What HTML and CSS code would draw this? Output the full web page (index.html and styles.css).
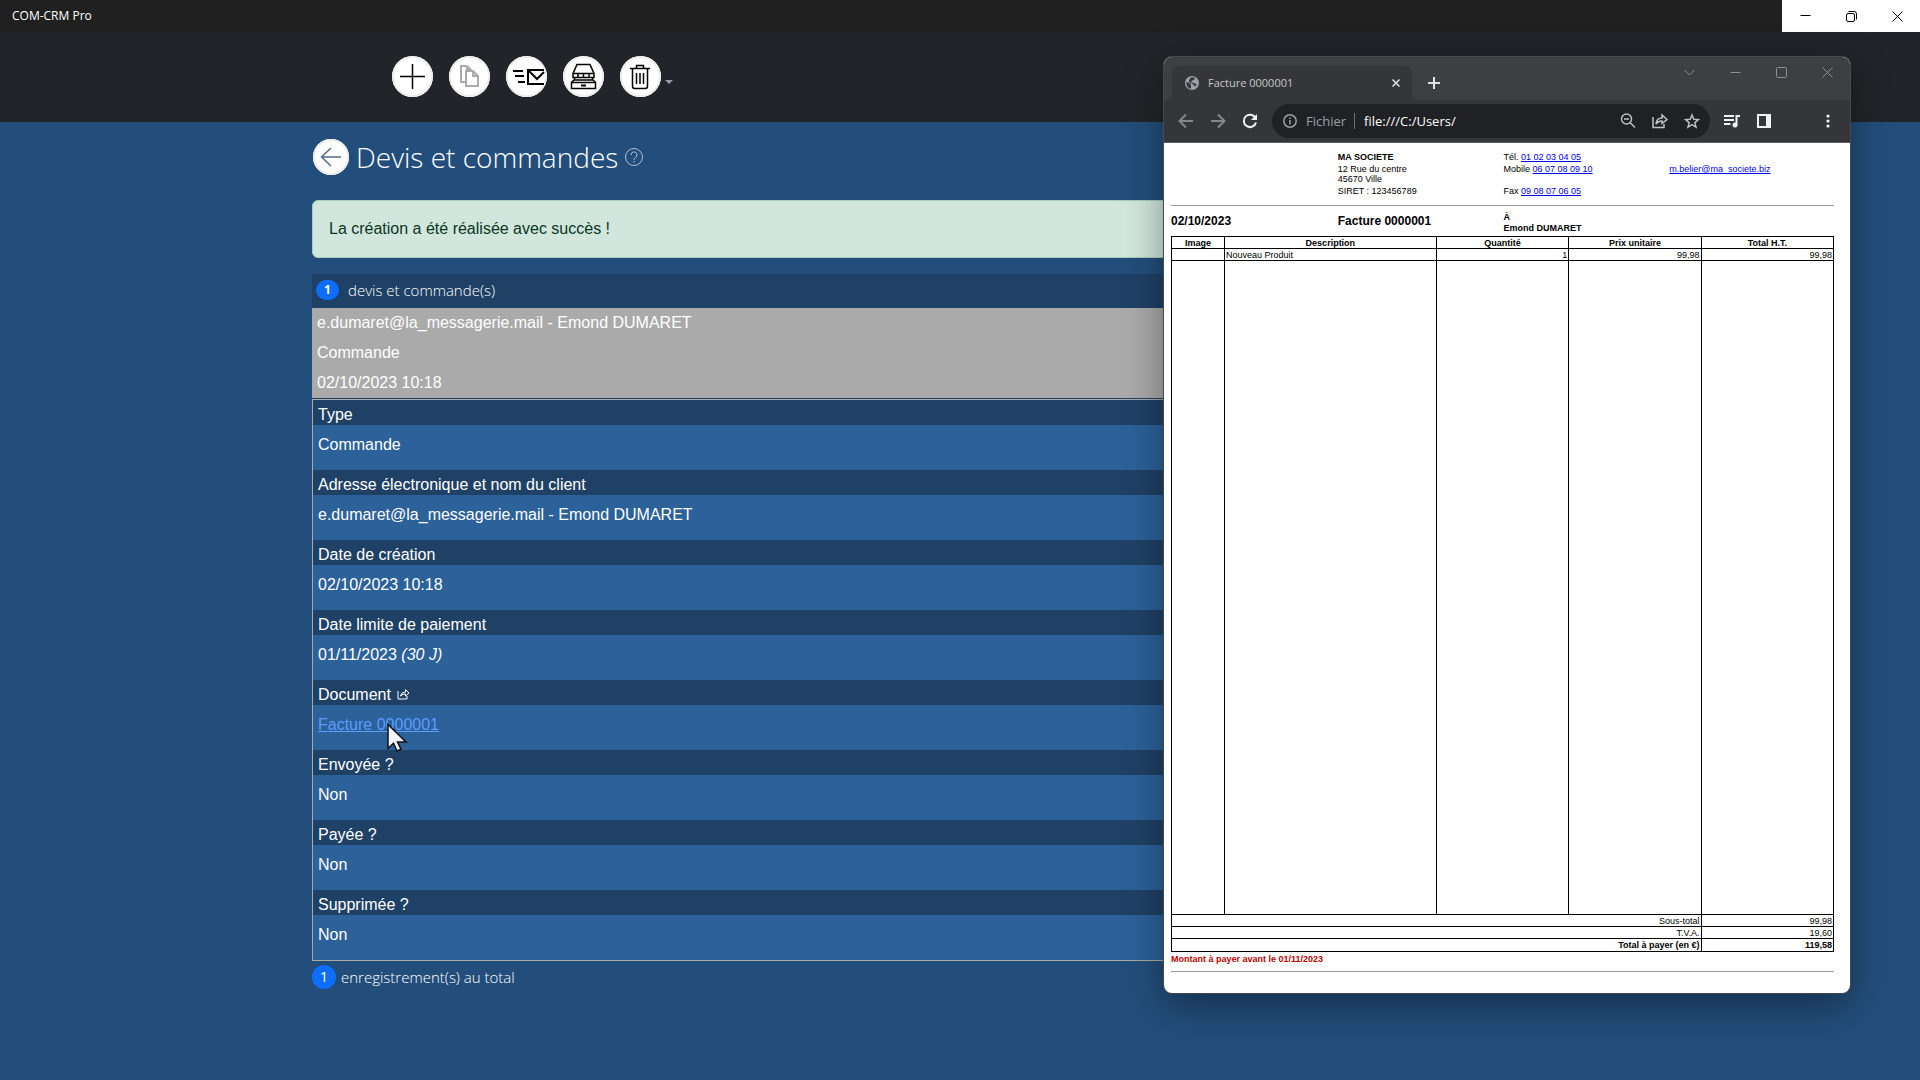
FILE: index.html
```html
<!DOCTYPE html>

<html lang="fr">
<head>
   <meta charset="utf-8">
   <meta name="viewport" content="width=device-width, initial-scale=1">

   <title>COM-CRM Pro</title>
   <link rel="stylesheet" href="styles.css">
</head>
<body>
  <div class="titlebar">
    <span class="titlebar-name">COM-CRM Pro</span>
    <div class="window-buttons window-buttons--light">
      <button type="button" aria-label="Réduire"><svg width="11" height="11" viewBox="0 0 11 11"><path d="M.5 4.5h10"/></svg></button>
      <button type="button" aria-label="Restaurer"><svg width="11" height="11" viewBox="0 0 11 11"><rect x=".5" y="2.5" width="8" height="8" rx="1.5"/><path d="M2.5.5H8A2.5 2.5 0 0 1 10.5 3v5.5"/></svg></button>
      <button type="button" aria-label="Fermer"><svg width="11" height="11" viewBox="0 0 11 11"><path d="M.5.5l10 10M10.5.5l-10 10"/></svg></button>
    </div>
  </div>

  <header class="header">
    <div class="container toolbar">
      <button type="button" class="round" aria-label="Ajouter">
        <svg width="41" height="41" viewBox="0 0 41 41"><path d="M20.5 8v25M8 20.5h25"/></svg>
      </button>
      <button type="button" class="round" aria-label="Copier" disabled>
        <svg width="41" height="41" viewBox="0 0 41 41"><path class="grey" d="M17 26h-5V10h6l4 4v1M18 10v4h4M17 15h7l5 5v10H17zM24 15v5h5"/></svg>
      </button>
      <button type="button" class="round" aria-label="Envoyer">
        <svg width="41" height="41" viewBox="0 0 41 41"><path class="thick" d="M7 15h10M9 20h9M12 26h7M38 14H22v14h16M23 15l8 8 7-7"/></svg>
      </button>
      <button type="button" class="round" aria-label="Archiver">
        <svg width="41" height="41" viewBox="0 0 41 41"><path d="M14 8.5h13l4 9v4H10v-4zM10 17.5h21M15 17.500v4M20.5 17.5v4M26 17.5v4M11.5 21.5v2l-3 3M29.5 21.5v2l3 3M11 24h19"/><rect x="8.5" y="26.5" width="24" height="6"/><path class="thick" d="M18 29.5h5"/></svg>
      </button>
      <button type="button" class="round" aria-label="Supprimer">
        <svg width="41" height="41" viewBox="0 0 41 41"><path d="M10 12.5h20M16.5 12V9.5h7V12M12.500 13v17q0 2.500 2 2.500h11q2 0 2-2.500V13M16.5 17v11M20 17v11M23.5 17v11"/></svg>
      </button>
      <button type="button" class="more" aria-label="Plus"></button>
    </div>
  </header>

  <main class="container">
    <div class="heading">
      <button type="button" class="round round--small" aria-label="Retour">
        <svg width="36" height="36" viewBox="0 0 36 36"><path class="blue" d="M28 18H9M18 9l-9.5 9 9.5 9"/></svg>
      </button>
      <h1>Devis et commandes</h1>
      <svg class="help" width="18" height="18" viewBox="0 0 18 18"><circle cx="9" cy="9" r="8.5"/><path d="M6 7a3 3 0 1 1 4.500 2.500Q9 10.300 9 12M9 13v1.500"/></svg>
    </div>

    <div class="alert" role="alert">La création a été réalisée avec succès !</div>

    <div class="count"><span class="badge">1</span> devis et commande(s)</div>

    <div class="order">
      <p>e.dumaret@la_messagerie.mail - Emond DUMARET</p>
      <p>Commande</p>
      <p>02/10/2023 10:18</p>
    </div>

    <dl class="details">
      <dt>Type</dt>
      <dd>Commande</dd>
      <dt>Adresse électronique et nom du client</dt>
      <dd>e.dumaret@la_messagerie.mail - Emond DUMARET</dd>
      <dt>Date de création</dt>
      <dd>02/10/2023 10:18</dd>
      <dt>Date limite de paiement</dt>
      <dd>01/11/2023 <em>(30 J)</em></dd>
      <dt>Document <svg class="open" width="13" height="12" viewBox="0 0 13 12"><path d="M1 3v8h9V8M3.5 8q.5-4 5-4V1.5L12 5 8.5 8V6q-3-.2-5 2z"/></svg></dt>
      <dd>
        <a href="#facture">Facture 0000001</a>
        <svg class="pointer" width="21" height="30" viewBox="0 0 21 30"><path d="M1 1.5v24l5.5-5.2 3.5 7.700 4-1.800-3.500-7.200H19z"/></svg>
      </dd>
      <dt>Envoyée ?</dt>
      <dd>Non</dd>
      <dt>Payée ?</dt>
      <dd>Non</dd>
      <dt>Supprimée ?</dt>
      <dd>Non</dd>
    </dl>

    <div class="total"><span class="badge badge--round">1</span> enregistrement(s) au total</div>
  </main>

  <!-- Browser window with the invoice -->
  <section class="browser">
    <div class="tabs">
      <div class="tab">
        <svg width="14" height="14" viewBox="0 0 14 14"><circle cx="7" cy="7" r="7" fill="#9aa0a6"/><path fill="#35363a" d="M1.5 6l3 1L6 9v3.800Q2 12 1.500 8zM6 1.500h4L9 4l-2 .5-1 2 3 .5 2.500 1.500L11 10l-2-.3L8 8 4.500 6.500 4 4z"/></svg>
        <span>Facture 0000001</span>
        <button type="button" aria-label="Fermer l'onglet"><svg width="8" height="8" viewBox="0 0 8 8"><path d="M.5.5l7 7M7.5.5l-7 7"/></svg></button>
      </div>
      <button type="button" class="new-tab" aria-label="Nouvel onglet"><svg width="12" height="12" viewBox="0 0 12 12"><path d="M6 0v12M0 6h12"/></svg></button>
      <div class="window-buttons">
        <button type="button" aria-label="Rechercher"><svg width="11" height="11" viewBox="0 0 11 11"><path d="M.5 3l5 5 5-5"/></svg></button>
        <button type="button" aria-label="Réduire"><svg width="11" height="11" viewBox="0 0 11 11"><path d="M.5 5.5h10"/></svg></button>
        <button type="button" aria-label="Agrandir"><svg width="11" height="11" viewBox="0 0 11 11"><rect x=".5" y=".5" width="10" height="10" rx="1"/></svg></button>
        <button type="button" aria-label="Fermer"><svg width="11" height="11" viewBox="0 0 11 11"><path d="M.5.5l10 10M10.5.5l-10 10"/></svg></button>
      </div>
    </div>

    <div class="bar">
      <button type="button" class="icon icon--dim" aria-label="Précédent"><svg width="16" height="16" viewBox="0 0 16 16"><path d="M15 8H2M8 1.5L1.500 8 8 14.500"/></svg></button>
      <button type="button" class="icon icon--dim" aria-label="Suivant"><svg width="16" height="16" viewBox="0 0 16 16"><path d="M1 8h13M8 1.5L14.500 8 8 14.500"/></svg></button>
      <button type="button" class="icon icon--bright" aria-label="Actualiser"><svg width="16" height="16" viewBox="0 0 16 16"><path d="M13.5 5A6.200 6.200 0 1 0 14 9.500"/><path class="solid" d="M15 1v6H9z"/></svg></button>
      <div class="address">
        <svg class="info" width="14" height="14" viewBox="0 0 14 14"><circle cx="7" cy="7" r="6.2"/><path d="M7 6v4.500M7 3.500V5"/></svg>
        <label class="scheme" for="url">Fichier</label>
        <input type="text" id="url" value="file:///C:/Users/">
        <button type="button" class="icon" aria-label="Zoom"><svg class="thin" width="16" height="16" viewBox="0 0 16 16"><circle cx="6.5" cy="6" r="5"/><path d="M10 9.5l5 5M4 6h5"/></svg></button>
        <button type="button" class="icon" aria-label="Partager"><svg class="thin" width="16" height="16" viewBox="0 0 16 16"><path d="M1 4v10.500h11V11M4 11q.5-6 6-6V2l5 4.500-5 4V8q-4 0-6 3z"/></svg></button>
        <button type="button" class="icon" aria-label="Favoris"><svg class="thin" width="16" height="16" viewBox="0 0 16 16"><path d="M8 2l1.800 4.200 4.600.4-3.500 3 1.100 4.500L8 11.700l-4 2.400 1.100-4.500-3.500-3 4.600-.4z"/></svg></button>
      </div>
      <button type="button" class="icon icon--bright" aria-label="Médias"><svg width="16" height="16" viewBox="0 0 16 16"><path d="M0 3h10M0 7h10M0 11h6.500M12.500 12V3H16"/><circle class="solid" cx="11" cy="12" r="2.5"/></svg></button>
      <button type="button" class="icon icon--bright" aria-label="Panneau latéral"><svg width="14" height="14" viewBox="0 0 14 14"><path class="solid" fill-rule="evenodd" d="M0 0h14v14H0zM2 2v10h7V2z"/></svg></button>
      <button type="button" class="icon icon--bright icon--menu" aria-label="Menu"><svg width="4" height="14" viewBox="0 0 4 14"><circle class="solid" cx="2" cy="2" r="1.6"/><circle class="solid" cx="2" cy="7" r="1.6"/><circle class="solid" cx="2" cy="12" r="1.6"/></svg></button>
    </div>

    <article class="invoice" id="facture">
      <div class="invoice-head">
        <strong class="col-2">MA SOCIETE</strong>
        <span>Tél. <a href="tel:0102030405">01 02 03 04 05</a></span>
        <span class="col-2">12 Rue du centre<br>45670 Ville</span>
        <span>Mobile <a href="tel:0607080910">06 07 08 09 10</a></span>
        <a href="mailto:m.belier@ma_societe.biz">m.belier@ma_societe.biz</a>
        <span class="col-2">SIRET : 123456789</span>
        <span>Fax <a href="tel:0908070605">09 08 07 06 05</a></span>
      </div>

      <div class="invoice-title">
        <h2>02/10/2023</h2>
        <h2>Facture 0000001</h2>
        <strong>À<br>Emond DUMARET</strong>
      </div>

      <table class="lines">
        <thead>
          <tr>
            <th class="w-image">Image</th>
            <th class="w-description">Description</th>
            <th>Quantité</th>
            <th>Prix unitaire</th>
            <th>Total H.T.</th>
          </tr>
        </thead>
        <tbody>
          <tr>
            <td></td>
            <td class="text">Nouveau Produit</td>
            <td>1</td>
            <td>99,98</td>
            <td>99,98</td>
          </tr>
          <tr class="filler"><td></td><td></td><td></td><td></td><td></td></tr>
        </tbody>
        <tfoot>
          <tr><td colspan="4">Sous-total</td><td>99,98</td></tr>
          <tr><td colspan="4">T.V.A.</td><td>19,60</td></tr>
          <tr class="due"><td colspan="4">Total à payer (en €)</td><td>119,58</td></tr>
        </tfoot>
      </table>

      <p class="deadline">Montant à payer avant le 01/11/2023</p>
    </article>
  </section>
</body>
</html>
```

FILE: styles.css
```css
*, *::before, *::after {
   box-sizing: border-box;
}
body {
   margin: 0;
   min-height: 100vh;
   background: #234e7b;
   color: #fff;
   font: 16px/24px "Liberation Sans", Arial, sans-serif;
}
h1, h2, p, dl, dd {
   margin: 0;
}
button {
   display: flex;
   align-items: center;
   justify-content: center;
   padding: 0;
   border: 0;
   background: none;
   color: inherit;
   font: inherit;
}
svg {
   flex: none;
   fill: none;
   stroke: currentColor;
}
.container {
   width: 100%;
   max-width: 1320px;
   margin: 0 auto;
   padding: 0 12px;
}

/* Title bar */
.titlebar {
   display: flex;
   align-items: center;
   justify-content: space-between;
   height: 32px;
   padding-left: 12px;
   background: #202020;
}
.titlebar-name {
   font: 12px/16px "Open Sans", sans-serif;
}
.window-buttons {
   display: flex;
   color: #8d9092;
}
.window-buttons button {
   width: 46px;
   height: 31px;
}
.window-buttons--light {
   background: #fff;
   color: #000;
}
.window-buttons--light button {
   height: 32px;
}

/* Toolbar */
.header {
   background: #212529;
}
.toolbar {
   display: flex;
   align-items: center;
   gap: 16px;
   height: 90px;
   padding-bottom: 2px;
   padding-left: 92px;
}
.round {
   width: 41px;
   height: 41px;
   border-radius: 50%;
   background: #fff;
   box-shadow: inset 0 0 0 2px #eee;
   color: #000;
}
.round svg {
   stroke-width: 1.5;
}
.round .thick {
   stroke-width: 2;
}
.round .grey {
   stroke: #aaa;
   stroke-width: 2;
}
.round .blue {
   stroke: #56698c;
}
.round--small {
   width: 36px;
   height: 36px;
}
.more {
   margin: 12px 0 0 -12px;
   border: 4px solid transparent;
   border-top-color: #9a9da0;
   border-bottom: 0;
}

/* Page */
.heading {
   display: flex;
   align-items: center;
   gap: 7px;
   padding: 16px 1px 24px;
}
h1 {
   font: 300 28px/38px "Open Sans", sans-serif;
}
.help {
   color: #b4c0cf;
}
.alert {
   padding: 16px;
   border: 1px solid #a3cfbb;
   border-radius: 6px;
   background: #d1e7dd;
   color: #0a3622;
}
.count {
   display: flex;
   align-items: center;
   gap: 9px;
   height: 34px;
   margin-top: 16px;
   padding: 0 4px 2px;
   background: #1f4166;
   font: 300 15px/24px "Open Sans", sans-serif;
}
.badge {
   width: 23px;
   border-radius: 10px;
   background: #0d6efd;
   font: bold 12px/20px "Open Sans", sans-serif;
   text-align: center;
}
.badge--round {
   width: 24px;
   border-radius: 50%;
   font: 14px/24px "Open Sans", sans-serif;
}
.order {
   border-bottom: 1px solid #1f4166;
   background: #aaa;
}
.order p {
   padding: 3px 5px;
}
.details {
   border: 1px solid #aaa;
   background: #2c6199;
}
.details dt {
   height: 25px;
   padding: 3px 5px 0;
   background: #1f4166;
}
.details dd {
   position: relative;
   height: 45px;
   padding: 8px 5px 0;
}
.details a {
   color: #5c9dff;
}
.open {
   margin-left: 2px;
}
.pointer {
   position: absolute;
   top: 18px;
   left: 74px;
   fill: #f3f5fa;
   stroke: #111;
   stroke-width: 1.5;
}
.total {
   display: flex;
   align-items: center;
   gap: 5px;
   margin-top: 4px;
   font: 300 15px/24px "Open Sans", sans-serif;
}

/* Browser window */
.browser {
   position: absolute;
   top: 57px;
   right: 70px;
   width: 686px;
   overflow: hidden;
   border-radius: 8px;
   background: #fff;
   color: #000;
   box-shadow: 0 0 0 1px #45494d, 0 12px 40px rgba(0,0,0,0.4);
}
.tabs {
   display: flex;
   align-items: flex-end;
   height: 43px;
   padding-left: 8px;
   background: #3c4043;
   color: #dee1e6;
}
.tab {
   position: relative;
   display: flex;
   align-items: center;
   gap: 9px;
   width: 240px;
   height: 34px;
   padding: 0 8px 0 13px;
   border-radius: 8px 8px 0 0;
   background: #35363a;
   font: 11px/16px "Open Sans", sans-serif;
}
.tab::before, .tab::after {
   content: "";
   position: absolute;
   bottom: 0;
   left: -8px;
   width: 8px;
   height: 8px;
   background: radial-gradient(circle at 0 0, transparent 8px, #35363a 8px);
}
.tab::after {
   left: 100%;
   background: radial-gradient(circle at 100% 0, transparent 8px, #35363a 8px);
}
.tab > svg {
   stroke: none;
}
.tab span {
   flex: 1;
   color: #c5c8cc;
}
.tab button {
   width: 16px;
   height: 16px;
}
.tab button svg {
   stroke-width: 1.5;
}
.new-tab {
   width: 28px;
   height: 34px;
   margin-left: 8px;
}
.new-tab svg {
   stroke-width: 2;
}
.tabs .window-buttons {
   align-self: flex-start;
   margin-left: auto;
}
.bar {
   display: flex;
   align-items: center;
   height: 43px;
   padding: 0 6px;
   border-bottom: 1px solid #5b5c5f;
   background: #35363a;
}
.icon {
   flex: none;
   width: 32px;
   height: 32px;
   color: #bdc1c6;
}
.icon svg {
   stroke-width: 2;
}
.icon .thin {
   stroke-width: 1.5;
}
.icon .solid {
   fill: currentColor;
   stroke: none;
}
.icon--dim {
   color: #85878a;
}
.icon--bright {
   color: #f1f3f4;
}
.icon--menu {
   margin-left: auto;
}
.address {
   display: flex;
   align-items: center;
   width: 438px;
   height: 34px;
   margin: 0 6px;
   padding: 0 2px 0 11px;
   border-radius: 17px;
   background: #202124;
   font: 13px/20px "Open Sans", sans-serif;
}
.info {
   margin-right: 9px;
   color: #9aa0a6;
   stroke-width: 1.5;
}
.scheme {
   padding-right: 8px;
   border-right: 1px solid #6b6e72;
   color: #9aa0a6;
   line-height: 16px;
}
.address input {
   flex: 1;
   min-width: 0;
   padding: 0 0 0 9px;
   border: 0;
   background: none;
   color: #fff;
   font: inherit;
}

/* Invoice */
.invoice {
   padding: 8px 16px 21px 7px;
   font-size: 9px;
   line-height: 10px;
}
.invoice a {
   color: #00e;
}
.invoice-head, .invoice-title {
   display: grid;
   grid-template-columns: repeat(4, 1fr);
}
.invoice-head {
   padding-bottom: 8px;
   border-bottom: 1px solid #999;
}
.invoice-head > * {
   padding: 1px;
}
.col-2 {
   grid-column: 2;
}
.invoice-title {
   align-items: center;
   height: 30px;
   line-height: 11px;
}
.invoice-title strong {
   padding: 3px 1px 0;
}
h2 {
   font: bold 12px/16px "Liberation Sans", Arial, sans-serif;
}
h2 + h2 {
   padding-left: 1px;
}
.lines {
   width: 100%;
   table-layout: fixed;
   border-collapse: collapse;
}
.lines th, .lines td {
   height: 12px;
   padding: 0 1px;
   border: 1px solid #000;
   text-align: right;
}
.lines th {
   text-align: center;
}
.lines .text {
   text-align: left;
}
.w-image {
   width: 8%;
}
.w-description {
   width: 32%;
}
.lines .filler td {
   height: 654px;
}
.lines .due td {
   height: 13px;
   font-weight: bold;
}
.deadline {
   padding: 2px 0 7px;
   border-bottom: 1px solid #999;
   color: #c00000;
   font-weight: bold;
}
```
